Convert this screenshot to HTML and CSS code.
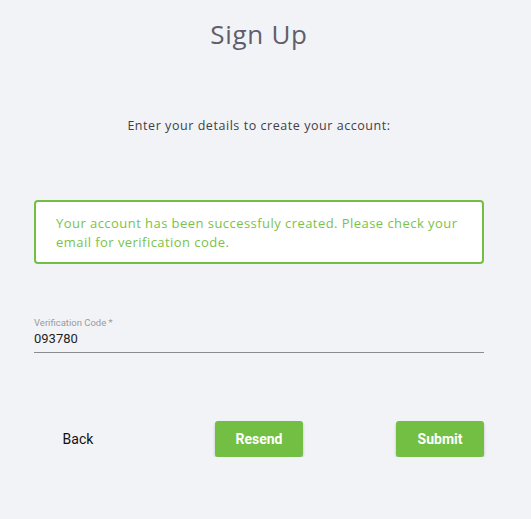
FILE: index.html
```html
<!DOCTYPE html>
<html>
<head>
<meta charset="utf-8">
<link rel="stylesheet" href="styles.css">
</head>
<body>
<div class="page">
  <h1 class="title">Sign Up</h1>
  <p class="subtitle">Enter your details to create your account:</p>
  <div class="alert">Your account has been successfuly created. Please check your email for verification code.</div>
  <div class="field">
    <label class="field-label">Verification Code *</label>
    <div class="field-value">093780</div>
  </div>
  <div class="actions">
    <button class="btn btn-text">Back</button>
    <button class="btn btn-primary">Resend</button>
    <button class="btn btn-primary">Submit</button>
  </div>
</div>
</body>
</html>
```
FILE: styles.css
```css
html, body {
  margin: 0;
  padding: 0;
  background: #f2f3f7;
}
body {
  font-family: "Open Sans", "Noto Sans", sans-serif;
}
.page {
  width: 450px;
  margin-left: 34px;
  padding-top: 16px;
}
.title {
  margin: 0;
  font-size: 26px;
  line-height: 36px;
  font-weight: 500;
  letter-spacing: 0.7px;
  color: #5f5f6c;
  text-align: center;
}
.subtitle {
  margin: 64px 0 0;
  font-size: 12.5px;
  line-height: 20px;
  letter-spacing: 0.55px;
  color: #3f3f46;
  text-align: center;
}
.alert {
  margin-top: 64px;
  box-sizing: border-box;
  height: 64px;
  padding: 12px 20px 0;
  border: 2px solid #72bf44;
  border-radius: 4px;
  background: #ffffff;
  color: #7bc247;
  font-size: 13px;
  line-height: 19px;
  letter-spacing: 0.45px;
}
.field {
  margin-top: 53px;
  border-bottom: 1px solid #8a8a8f;
  font-family: Roboto, sans-serif;
}
.field-label {
  display: block;
  font-size: 9.5px;
  line-height: 12px;
  color: #9a9a9f;
}
.field-value {
  font-size: 13px;
  line-height: 20px;
  padding-bottom: 3px;
  color: #1f1f23;
}
.actions {
  margin-top: 68px;
  display: flex;
  justify-content: space-between;
}
.btn {
  width: 88px;
  height: 36px;
  border: none;
  border-radius: 3px;
  font-family: Roboto, sans-serif;
  font-size: 14px;
  cursor: pointer;
}
.btn-text {
  background: transparent;
  color: #111;
  font-weight: 400;
}
.btn-primary {
  background: #72bf44;
  color: #ffffff;
  font-weight: 700;
  box-shadow: 0 2px 3px rgba(0, 0, 0, 0.22);
}
```
